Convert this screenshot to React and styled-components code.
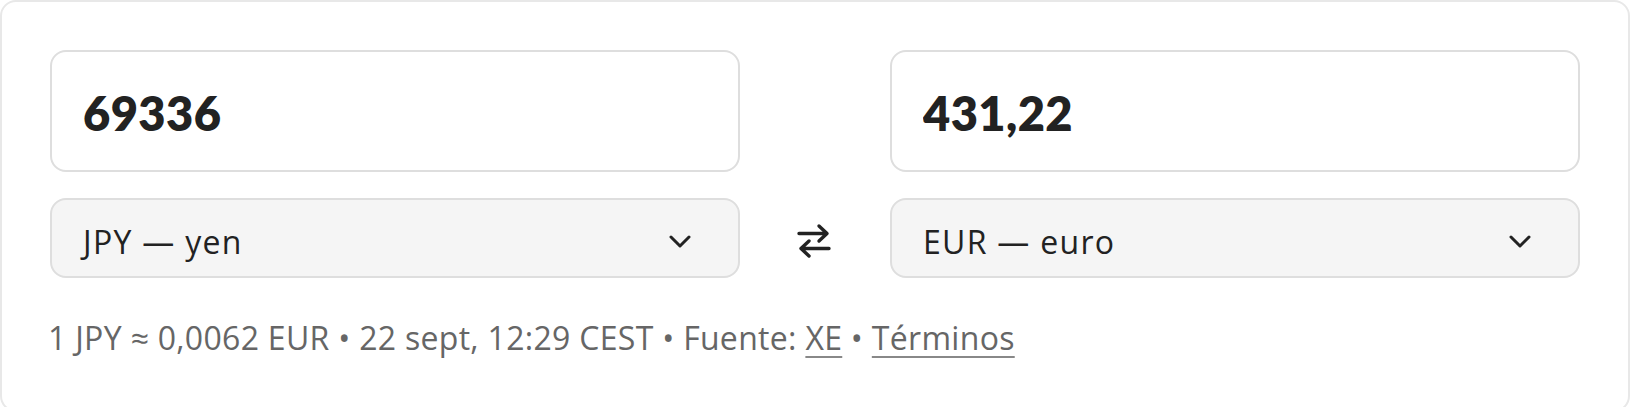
import styled, { createGlobalStyle } from "styled-components";

//---------- global --------
const GlobalStyle = createGlobalStyle`
  body {
    margin: 0;
    background: #ffffff;
    font-family: "Open Sans", "Liberation Sans", sans-serif;
    color: #222222;
  }
`;

const SwapIcon = () => (
  <svg width="34" height="38" viewBox="0 0 34 38" fill="none">
    <path
      d="M2 11.5h28M22 4l8 7.5-8 7.5"
      stroke="#222"
      strokeWidth="3.4"
      strokeLinecap="round"
      strokeLinejoin="round"
    />
    <path
      d="M32 26.5H4M12 19l-8 7.5 8 7.5"
      stroke="#222"
      strokeWidth="3.4"
      strokeLinecap="round"
      strokeLinejoin="round"
    />
  </svg>
);

const Chevron = () => (
  <svg width="22" height="13" viewBox="0 0 22 13" fill="none">
    <path
      d="M2 2l9 9 9-9"
      stroke="#222"
      strokeWidth="3"
      strokeLinecap="round"
      strokeLinejoin="round"
    />
  </svg>
);

const Converter = () => {
  return (
    <Card>
      <Grid>
        <Amount defaultValue="69336" />
        <span />
        <Amount defaultValue="431,22" />
        <Select>
          <span>JPY — yen</span>
          <Chevron />
        </Select>
        <Swap aria-label="Intercambiar">
          <SwapIcon />
        </Swap>
        <Select>
          <span>EUR — euro</span>
          <Chevron />
        </Select>
      </Grid>
      <Footer>
        1 JPY ≈ 0,0062 EUR • 22 sept, 12:29 CEST • Fuente: <a href="#xe">XE</a> •{" "}
        <a href="#terminos">Términos</a>
      </Footer>
    </Card>
  );
};

const App = () => (
  <>
    <GlobalStyle />
    <Converter />
  </>
);

const Card = styled.div`
  box-sizing: border-box;
  width: 1630px;
  min-height: 412px;
  padding: 48px;
  background: #ffffff;
  border: 2px solid #e8e8e8;
  border-radius: 16px;
`;

const Grid = styled.div`
  display: grid;
  grid-template-columns: 1fr 150px 1fr;
  grid-template-rows: 122px 80px;
  row-gap: 26px;
`;

const Amount = styled.input`
  box-sizing: border-box;
  width: 100%;
  height: 100%;
  margin: 0;
  padding: 4px 31px 0;
  border: 2px solid #dedede;
  border-radius: 16px;
  background: #ffffff;
  font-family: "Lato", "Liberation Sans", sans-serif;
  font-size: 47px;
  font-weight: 800;
  letter-spacing: 0.4px;
  color: #222222;
  outline: none;
`;

const Select = styled.div`
  box-sizing: border-box;
  display: flex;
  align-items: center;
  justify-content: space-between;
  padding: 6px 47px 0 31px;
  border: 2px solid #dedede;
  border-radius: 16px;
  background: #f5f5f5;
  font-size: 32px;
  letter-spacing: 1.3px;
  color: #222222;
`;

const Swap = styled.div`
  display: flex;
  align-items: center;
  justify-content: center;
  padding-top: 6px;
  padding-right: 2px;
`;

const Footer = styled.p`
  margin: 40px 0 0 -2px;
  font-size: 32px;
  line-height: 40px;
  letter-spacing: 0.3px;
  color: #666666;
  a {
    color: #666666;
    text-decoration: underline;
    text-decoration-thickness: 2px;
    text-underline-offset: 6px;
    text-decoration-color: #888888;
  }
`;

export default App;
